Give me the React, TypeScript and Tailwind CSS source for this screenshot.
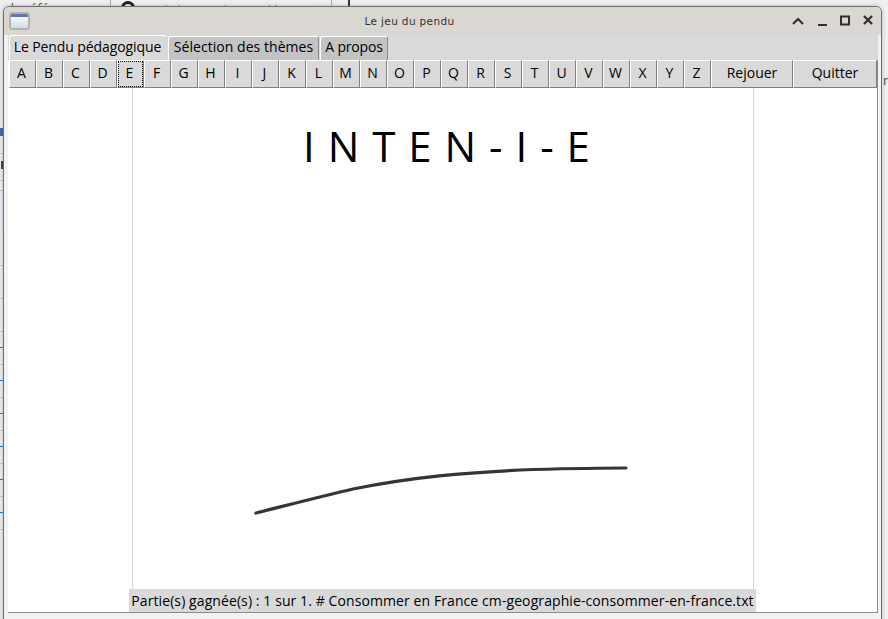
const LETTERS = "ABCDEFGHIJKLMNOPQRSTUVWXYZ".split("");
const GREY_TICKS = [153, 180, 190, 232, 265, 298, 331, 364, 397, 430, 463, 496, 529];
const BLUE_TICKS = [347, 380, 413, 446, 479, 512];

function KeyButton({ label, focused, className = "" }: { label: string; focused?: boolean; className?: string }) {
  return (
    <button
      className={`relative flex h-[28px] items-center justify-center border border-t-white border-l-white border-r-[#7f7f7f] border-b-[#7f7f7f] bg-[#d9d9d9] pb-[3px] text-[14px] text-black ${className} ${
        focused ? "outline-1 -outline-offset-2 outline-dotted outline-black" : ""
      }`}
    >
      {label}
    </button>
  );
}

function Tab({ label, active, className }: { label: string; active?: boolean; className: string }) {
  return (
    <div
      className={`flex items-center justify-center rounded-t-[3px] border-t border-l border-white pb-[4px] text-[14px] text-black whitespace-nowrap ${className} ${
        active ? "h-[25px] bg-[#d9d9d9]" : "mt-[1px] h-[24px] border-r border-r-[#8a8a8a] bg-[#c3c3c3]"
      }`}
    >
      {label}
    </div>
  );
}

function Backdrop() {
  return (
    <>
      <div className="absolute inset-x-0 top-0 flex h-[6px] items-start overflow-hidden bg-[#efefef] font-['Noto_Sans',sans-serif] text-[13px] leading-[14px] text-[#333]">
        <span className="ml-[6px] mt-[1px] w-[104px] truncate text-[#666]">de références ×</span>
        <span className="h-[6px] w-px bg-[#aaa]" />
        <span className="ml-[10px] mt-[1px] h-[14px] w-[14px] rounded-full border-[3px] border-[#222]" />
        <span className="ml-[10px] mt-[3px] w-[170px] truncate text-[#777]">mais je ne sais pas si le</span>
        <span className="mt-[1px] w-[16px] text-[#777]">×</span>
        <span className="h-[6px] w-px bg-[#aaa]" />
        <span className="ml-[16px] h-[6px] w-[2px] bg-[#333]" />
      </div>
      {GREY_TICKS.map((y) => (
        <div key={y} className="absolute left-0 h-px w-[3px] bg-[#c8c8c8]" style={{ top: y }} />
      ))}
      {BLUE_TICKS.map((y) => (
        <div key={y} className="absolute left-0 h-px w-[3px] bg-[#1a73c8]" style={{ top: y }} />
      ))}
      <div className="absolute left-0 top-[128px] h-[8px] w-[3px] bg-[#3b6ea5]" />
      <div className="absolute left-[1px] top-[161px] h-[8px] w-[2px] bg-[#444]" />
      <div className="absolute left-0 top-[191px] h-[42px] w-[3px] bg-[#e8eef5]" />
      <div className="absolute right-0 top-[72px] font-['Noto_Sans',sans-serif] text-[13px] leading-[16px] text-[#555]">
        <span className="block w-[5px] overflow-hidden">nc</span>
      </div>
    </>
  );
}

function TitleBar() {
  return (
    <div className="flex h-[28px] shrink-0 items-center rounded-t-[6px] bg-[#dad6d2] pl-[5px] pr-[3px]">
      <div className="h-[18px] w-[21px] overflow-hidden rounded-[3px] border-2 border-[#b4b2ae] bg-gradient-to-b from-white to-[#d4dbe6]">
        <div className="h-[3px] bg-[#5a78b0]" />
      </div>
      <div className="flex-1 pt-[2px] text-center font-['DejaVu_Sans',sans-serif] text-[10.5px] tracking-[0.35px] text-[#333]">
        Le jeu du pendu
      </div>
      <svg width="89" height="14" viewBox="0 0 89 14" fill="none" stroke="#2e2e2e" strokeWidth="2">
        <path d="M4 10 L9 5 L14 10" />
        <path d="M29 11 H38" />
        <rect x="52" y="2.5" width="8" height="8" />
        <path d="M75 2 L83 10 M83 2 L75 10" strokeWidth="2.2" />
      </svg>
    </div>
  );
}

export default function App() {
  return (
    <div className="relative h-[619px] w-[888px] overflow-hidden bg-[#f0f0f0] font-['Open_Sans',sans-serif]">
      <Backdrop />

      <div className="absolute left-[3px] top-[6px] flex h-[620px] w-[879px] flex-col rounded-t-[6px] border border-[#6f6f6f] bg-[#f2f2f2] shadow-[0_0_4px_rgba(0,0,0,0.25)]">
        <TitleBar />

        <div className="flex min-h-0 flex-1 flex-col pl-[4px] pr-[3px]">
          {/* Tabs */}
          <div className="flex h-[25px] shrink-0 gap-px bg-[#d9d9d9] pl-px">
            <Tab label="Le Pendu pédagogique" active className="w-[158px] pr-[2px] tracking-[-0.1px]" />
            <Tab label="Sélection des thèmes" className="w-[151px] tracking-[0.05px]" />
            <Tab label="A propos" className="w-[68px] tracking-[-0.2px]" />
          </div>

          <div className="flex h-[553px] shrink-0 flex-col border-r border-b border-[#8a8a8a] bg-white">
            {/* Letters */}
            <div className="grid h-[28px] shrink-0 grid-cols-[repeat(26,minmax(0,1fr))_82px_84px] pl-[1px]">
              {LETTERS.map((l) => (
                <KeyButton key={l} label={l} focused={l === "E"} className="pr-[2px]" />
              ))}
              <KeyButton label="Rejouer" />
              <KeyButton label="Quitter" />
            </div>

            {/* Drawing area */}
            <div className="relative min-h-0 flex-1">
              <div className="ml-[124px] flex h-full w-[622px] flex-col items-center border-x border-[#d6d6d6]">
                <div className="mt-[29px] pl-[8px] text-[42px] leading-[57px] tracking-[1px] text-black whitespace-nowrap">
                  I N T E N - I - E
                </div>
                <svg className="ml-[-1px] mt-[289px]" width="380" height="56" viewBox="0 0 380 56" fill="none">
                  <path
                    d="M3 50 C 35 42, 70 33, 100 26 C 160 14, 210 9.5, 280 6.5 C 320 5.5, 350 5, 373 5"
                    stroke="#353535"
                    strokeWidth="3.2"
                    strokeLinecap="round"
                  />
                </svg>
              </div>
              <div className="absolute bottom-0 left-[121px] flex h-[23px] w-[627px] items-center justify-center bg-[#d9d9d9] text-[14px] tracking-[0.09px] text-black whitespace-nowrap">
                Partie(s) gagnée(s) : 1 sur 1. # Consommer en France cm-geographie-consommer-en-france.txt
              </div>
            </div>
          </div>
        </div>
      </div>
    </div>
  );
}
